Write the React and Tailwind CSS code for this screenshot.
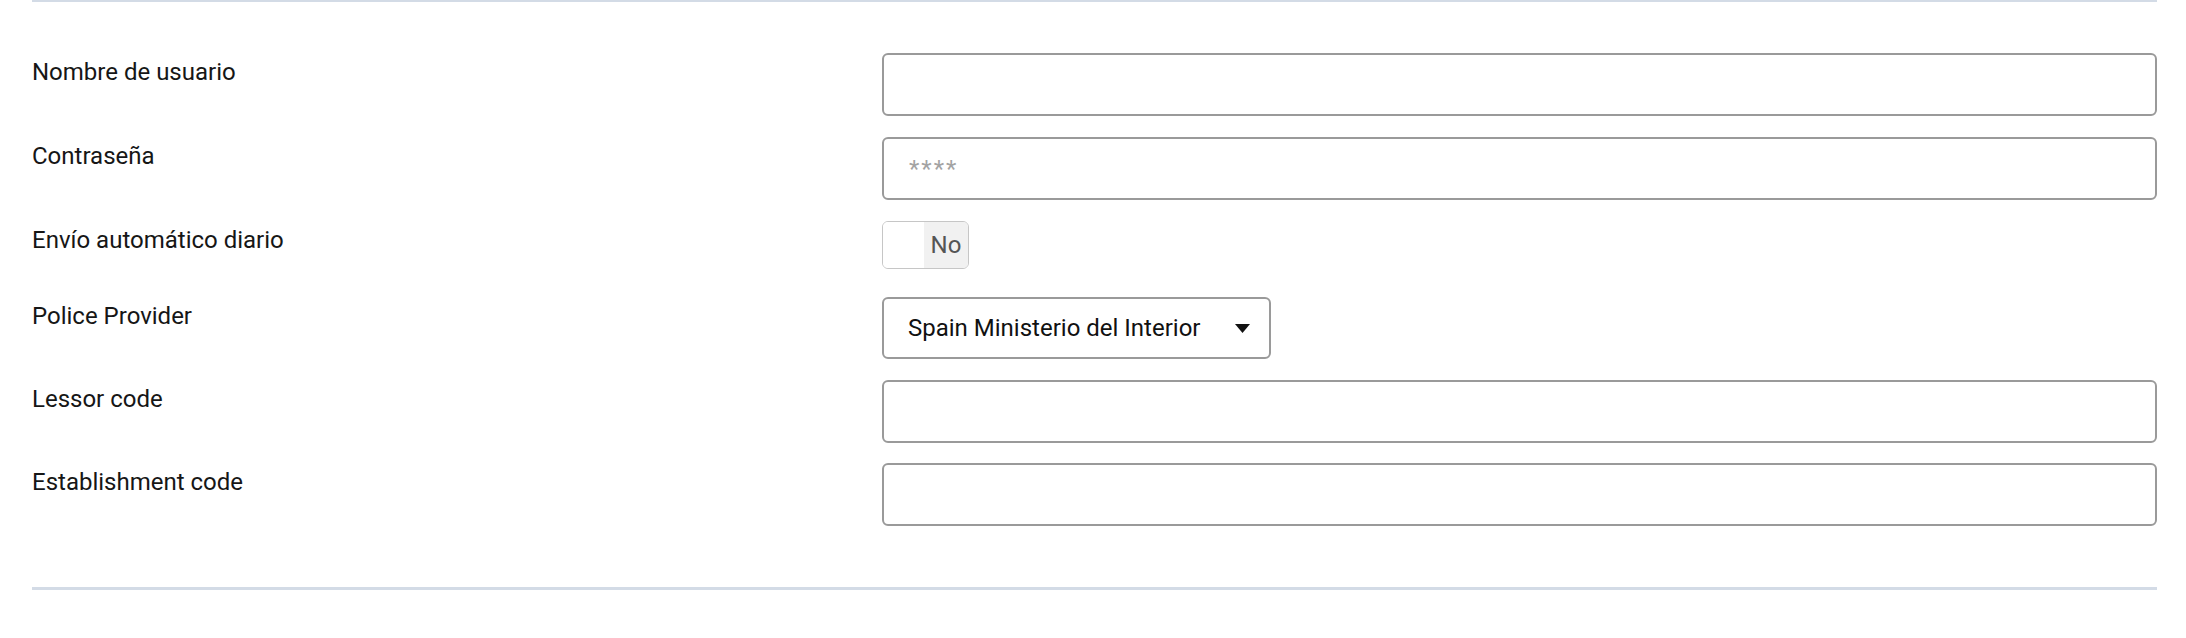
import { useState } from "react";

function FieldRow({ label, className = "", children }) {
  return (
    <div className={`flex ${className}`}>
      <label className="w-[850px] shrink-0 pt-[5px] text-[24px] leading-[28px] text-[#161616]">
        {label}
      </label>
      <div className="flex-1">{children}</div>
    </div>
  );
}

function TextInput({ type = "text", placeholder }) {
  return (
    <input
      type={type}
      placeholder={placeholder}
      className="block h-[63px] w-full rounded-[6px] border-2 border-[#9a9a9a] bg-white px-[25px] text-[24px] tracking-[2px] text-[#161616] outline-none placeholder:text-[#a3a3a3]"
    />
  );
}

export default function App() {
  const [autoSend, setAutoSend] = useState(false);

  return (
    <div className="min-h-[638px] w-full bg-white pl-[32px] pr-[29px] font-['Roboto',sans-serif]">
      <div className="h-[2px] w-full bg-[#d3dbe6]" />

      <div className="flex flex-col pt-[51px] pb-[61px]">
        <FieldRow label="Nombre de usuario" className="mb-[21px]">
          <TextInput />
        </FieldRow>

        <FieldRow label="Contraseña" className="mb-[21px]">
          <TextInput type="password" placeholder="****" />
        </FieldRow>

        <FieldRow label="Envío automático diario" className="mb-[28px]">
          <button
            type="button"
            onClick={() => setAutoSend(!autoSend)}
            className="flex h-[48px] w-[87px] overflow-hidden rounded-[6px] border-[1.5px] border-[#c6c6c6] bg-white"
          >
            <span className="w-[41px] bg-white" />
            <span className="flex flex-1 items-center justify-center bg-[#f1f1f1] text-[24px] text-[#555]">
              No
            </span>
          </button>
        </FieldRow>

        <FieldRow label="Police Provider" className="mb-[21px]">
          <button
            type="button"
            className="flex h-[62px] w-[389px] items-center justify-between rounded-[6px] border-2 border-[#9a9a9a] bg-white pl-[24px] pr-[19px] text-[24px] text-[#111]"
          >
            <span>Spain Ministerio del Interior</span>
            <svg width="15" height="9" viewBox="0 0 15 9" className="mt-[1px]">
              <path d="M0 0h15L7.5 9z" fill="#111" />
            </svg>
          </button>
        </FieldRow>

        <FieldRow label="Lessor code" className="mb-[20px]">
          <TextInput />
        </FieldRow>

        <FieldRow label="Establishment code">
          <TextInput />
        </FieldRow>
      </div>

      <div className="h-[3px] w-full bg-[#d3dbe6]" />
    </div>
  );
}
